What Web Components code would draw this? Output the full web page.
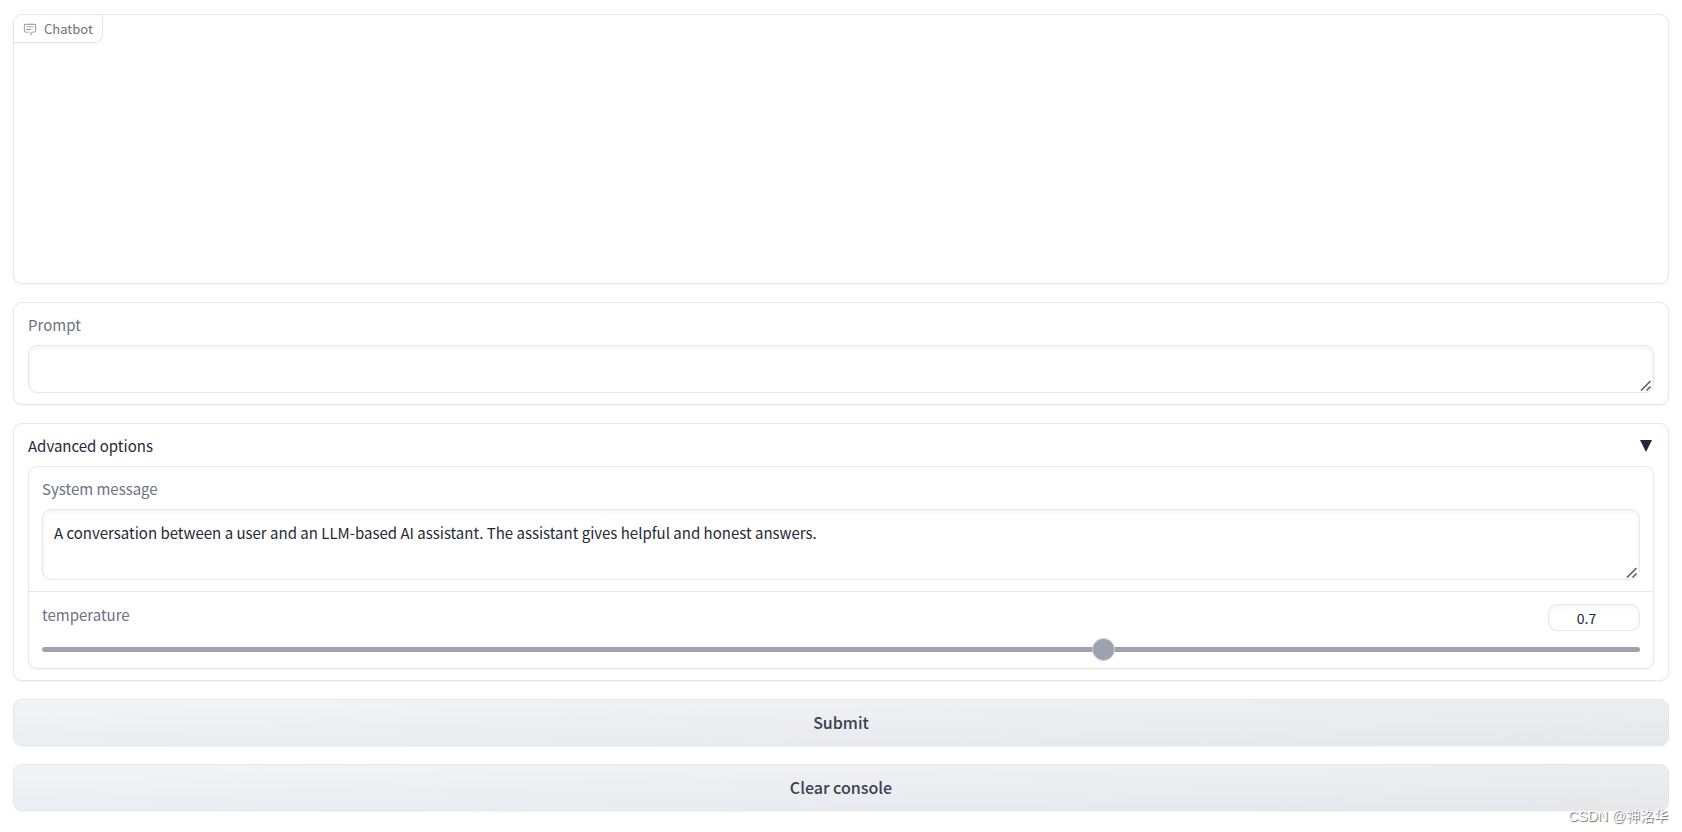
<!DOCTYPE html>
<html lang="en">
<head>
<meta charset="utf-8">
<meta name="viewport" content="width=device-width, initial-scale=1">
<title>Chatbot</title>
<style>
  :root {
    --color-border: #e5e7eb;
    --color-label: #6b7280;
    --color-text: #1f2937;
    --color-slider: #9ca3af;
    --radius: 9px;
    --shadow-drop: 0 1px 2px rgba(0, 0, 0, 0.05);
    --shadow-inset: inset 0 2px 4px rgba(0, 0, 0, 0.05);
  }

  body {
    margin: 0;
    background: #fff;
    color: var(--color-text);
    font-family: "Noto Sans CJK SC", "Open Sans", sans-serif;
    font-size: 15px;
    line-height: 23px;
  }
</style>
</head>
<body>
<chat-app></chat-app>

<script>
"use strict";

function defineElement(name, html, setup) {
  const template = document.createElement('template');
  template.innerHTML = html;
  window.customElements.define(name, class extends HTMLElement {
    constructor() {
      super();
      this.attachShadow({ mode: 'open' });
      this.shadowRoot.appendChild(template.content.cloneNode(true));
    }
    connectedCallback() {
      if (setup) {
        setup(this, this.shadowRoot);
      }
    }
  });
}

defineElement('ui-block', `
<style>
  :host {
    display: block;
    box-sizing: border-box;
    border: 1px solid var(--color-border);
    border-radius: var(--radius);
    box-shadow: var(--shadow-drop);
    background: #fff;
  }
</style>
<slot></slot>
`);

defineElement('chat-log', `
<style>
  :host {
    display: block;
    height: 268px;
  }

  .label {
    display: inline-flex;
    align-items: center;
    gap: 7px;
    height: 28px;
    padding: 0 9px;
    border: solid var(--color-border);
    border-width: 0 1px 1px 0;
    border-radius: var(--radius) 0;
    box-shadow: var(--shadow-drop);
    box-sizing: border-box;
    color: var(--color-label);
    font-size: 13px;
    line-height: 18px;
  }

  svg {
    width: 14px;
    height: 14px;
    fill: currentColor;
    opacity: 0.8;
  }
</style>
<div class="label">
  <svg viewBox="0 0 32 32" aria-hidden="true">
    <path d="M17.74 30L16 29l4-7h6a2 2 0 0 0 2-2V8a2 2 0 0 0-2-2H6a2 2 0 0 0-2 2v12a2 2 0 0 0 2 2h9v2H6a4 4 0 0 1-4-4V8a4 4 0 0 1 4-4h20a4 4 0 0 1 4 4v12a4 4 0 0 1-4 4h-4.84Z"/>
    <path d="M8 10h16v2H8zm0 6h10v2H8z"/>
  </svg>
  <slot></slot>
</div>
`);

defineElement('text-field', `
<style>
  :host {
    display: block;
    padding: 10px var(--field-inset, 14px) 11px;
  }

  label {
    display: block;
    margin-bottom: 9px;
    color: var(--color-label);
  }

  textarea {
    display: block;
    box-sizing: border-box;
    width: 100%;
    margin: 0;
    padding: 11px 11px 12px;
    border: 1px solid var(--color-border);
    border-radius: var(--radius);
    outline: none;
    background: #fff;
    box-shadow: var(--shadow-inset);
    color: var(--color-text);
    font: inherit;
    resize: vertical;
    overflow: hidden;
  }

  textarea:focus {
    border-color: var(--color-slider);
  }

  textarea::-webkit-resizer {
    background: url("data:image/svg+xml,%3Csvg xmlns='http://www.w3.org/2000/svg' width='15' height='15' viewBox='0 0 15 15'%3E%3Cpath d='M3 13.5L12.5 4M8.5 13.5L12.5 9.5' stroke='%23555' stroke-width='1.5'/%3E%3C/svg%3E") no-repeat right bottom;
  }
</style>
<label for="text"><slot></slot></label>
<textarea id="text"></textarea>
`, (host, root) => {
  const textarea = root.getElementById('text');
  textarea.rows = Number(host.getAttribute('rows')) || 1;
  textarea.value = host.getAttribute('value') || '';
  textarea.spellcheck = false;
});

defineElement('range-field', `
<style>
  :host {
    display: block;
    padding: 12px var(--field-inset, 14px) 11px;
  }

  .head {
    display: flex;
    justify-content: space-between;
    align-items: flex-start;
    margin-bottom: 10px;
  }

  label {
    color: var(--color-label);
    line-height: 21px;
  }

  input {
    box-sizing: border-box;
    margin: 0;
    font: inherit;
    color: var(--color-text);
  }

  input[type=number] {
    width: 92px;
    height: 27px;
    padding: 0 8px;
    border: 1px solid var(--color-border);
    border-radius: var(--radius);
    outline: none;
    background: #fff;
    box-shadow: var(--shadow-inset);
    font-size: 14px;
    text-align: center;
  }

  input[type=range] {
    appearance: none;
    display: block;
    width: 100%;
    height: 16px;
    background: transparent;
    cursor: pointer;
  }

  input[type=range]::-webkit-slider-runnable-track {
    height: 5px;
    border-radius: 3px;
    background: var(--color-slider);
  }

  input[type=range]::-webkit-slider-thumb {
    appearance: none;
    box-sizing: border-box;
    width: 23px;
    height: 23px;
    margin-top: -9px;
    border: 1px solid #d1d5db;
    border-radius: 50%;
    background: var(--color-slider);
  }
</style>
<div class="head">
  <label for="range"><slot></slot></label>
  <input id="number" type="number">
</div>
<input id="range" type="range">
`, (host, root) => {
  const number = root.getElementById('number');
  const range = root.getElementById('range');
  for (const input of [number, range]) {
    input.min = host.getAttribute('min');
    input.max = host.getAttribute('max');
    input.step = host.getAttribute('step');
    input.value = host.getAttribute('value');
  }
  number.setAttribute('aria-label', `${host.textContent} value`);
  number.oninput = () => { range.value = number.value; };
  range.oninput = () => { number.value = range.value; };
});

defineElement('option-group', `
<style>
  :host {
    display: block;
    padding: 10px 14px 11px;
  }

  button {
    display: flex;
    justify-content: space-between;
    align-items: center;
    width: 100%;
    margin: 0 0 9px;
    padding: 0 2px 0 0;
    border: none;
    background: none;
    color: inherit;
    font: inherit;
    cursor: pointer;
  }

  svg {
    width: 12px;
    height: 12px;
    fill: currentColor;
  }

  button[aria-expanded=false] svg {
    transform: rotate(90deg);
  }

  .fields {
    --field-inset: 13px;
  }

  .fields[hidden] {
    display: none;
  }

  ::slotted(range-field) {
    border-top: 1px solid var(--color-border);
  }
</style>
<button type="button" aria-expanded="true">
  <slot name="title"></slot>
  <svg viewBox="0 0 12 12" aria-hidden="true"><path d="M0 0H12L6 12Z"/></svg>
</button>
<ui-block class="fields"><slot></slot></ui-block>
`, (host, root) => {
  const button = root.querySelector('button');
  const fields = root.querySelector('.fields');
  button.onclick = () => {
    fields.hidden = !fields.hidden;
    button.setAttribute('aria-expanded', String(!fields.hidden));
  };
});

defineElement('action-button', `
<style>
  :host {
    display: block;
  }

  button {
    display: block;
    box-sizing: border-box;
    width: 100%;
    padding: 10px 20px;
    border: 1px solid var(--color-border);
    border-radius: var(--radius);
    background: linear-gradient(to bottom right, #f3f4f6, #e5e7eb);
    box-shadow: var(--shadow-drop);
    color: #374151;
    font: inherit;
    font-size: 16px;
    font-weight: 500;
    line-height: 25px;
    cursor: pointer;
  }

  button:hover {
    background: linear-gradient(to bottom right, #f3f4f6, #f3f4f6);
  }
</style>
<button type="button"><slot></slot></button>
`);

// Lies over the bottom right corner of the page
defineElement('page-mark', `
<style>
  :host {
    position: absolute;
    right: 14px;
    bottom: 4px;
    color: #fff;
    font-family: "Liberation Sans", "Noto Sans CJK SC", sans-serif;
    font-size: 14px;
    line-height: 24px;
    text-shadow: 1px 1px 1px #666;
    pointer-events: none;
  }
</style>
<slot></slot>
`);

defineElement('chat-app', `
<style>
  :host {
    position: relative;
    display: flex;
    flex-direction: column;
    gap: 18px;
    box-sizing: border-box;
    min-height: 100vh;
    padding: 14px 13px;
  }
</style>
<ui-block><chat-log>Chatbot</chat-log></ui-block>
<ui-block><text-field>Prompt</text-field></ui-block>
<ui-block>
  <option-group>
    <span slot="title">Advanced options</span>
    <text-field rows="2" value="A conversation between a user and an LLM-based AI assistant. The assistant gives helpful and honest answers.">System message</text-field>
    <range-field min="0.1" max="1" step="0.1" value="0.7">temperature</range-field>
  </option-group>
</ui-block>
<action-button>Submit</action-button>
<action-button>Clear console</action-button>
<page-mark>CSDN @神洛华</page-mark>
`);
</script>
</body>
</html>
